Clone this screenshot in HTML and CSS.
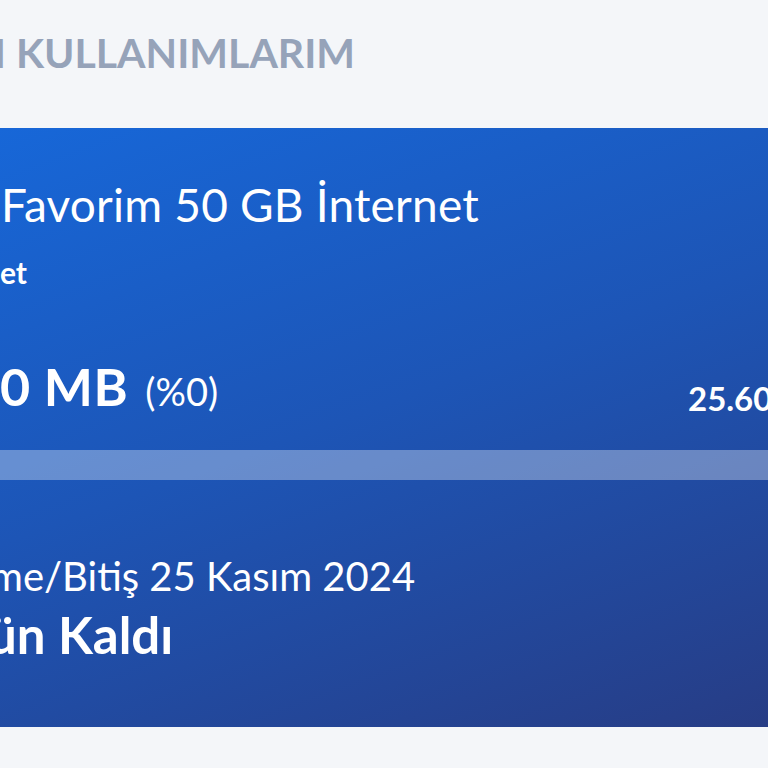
FILE: index.html
```html
<!DOCTYPE html>
<html lang="tr">

<head>
    <meta charset="UTF-8">
    <meta name="viewport" content="width=device-width, initial-scale=1.0">
    <title>Kullanımlarım</title>
    <link rel="stylesheet" href="styles.css">
</head>

<body>
    <div class="page">
        <h2 class="section-title"><span class="cut">TÜM</span> KULLANIMLARIM</h2>

        <div class="package-card">
            <div class="plan-name"><span class="cut">Süper</span> Favorim 50 GB İnternet</div>
            <div class="plan-type"><span class="cut">İntern</span>et</div>

            <div class="usage-row">
                <div class="used"><span class="cut">1</span>0 MB <span class="percent">(%0)</span></div>
                <div class="total">25.600 MB</div>
            </div>

            <div class="bar">
                <div class="bar-fill" style="width: 0%"></div>
            </div>

            <div class="renew"><span class="cut">Yenile</span>me/Bitiş 25 Kasım 2024</div>
            <div class="days"><span class="cut">7 G</span>ün Kaldı</div>
        </div>
    </div>
</body>

</html>
```

FILE: styles.css
```css
body {
    margin: 0;
    background: #f4f6f9;
    font-family: Lato, "Open Sans", sans-serif;
    overflow: hidden;
}

.page {
    width: 900px;
}

/* hidden word prefix that runs off the left edge */
.cut {
    display: inline-block;
    width: 0;
    direction: rtl;
    white-space: nowrap;
}

.section-title {
    margin: 0;
    padding: 28px 0 0 6px;
    height: 128px;
    box-sizing: border-box;
    font-size: 41px;
    line-height: 1.2;
    font-weight: 700;
    color: #96a3b9;
    white-space: nowrap;
}

.package-card {
    background: linear-gradient(160deg, #1767d8 0%, #1d55b6 45%, #283a80 100%);
    color: #ffffff;
    padding: 54px 0 67px 0;
    white-space: nowrap;
}

.plan-name {
    font-size: 46px;
    line-height: 1;
    letter-spacing: 0.2px;
    margin-left: -11px;
}

.plan-type {
    margin-top: 29px;
    font-size: 30px;
    line-height: 1;
    font-weight: 700;
}

.usage-row {
    margin-top: 73px;
    display: flex;
    align-items: flex-start;
}

.used {
    width: 702px;
    font-size: 52px;
    line-height: 1;
    font-weight: 700;
    letter-spacing: 0.5px;
    margin-left: -14px;
    padding-left: 14px;
    box-sizing: border-box;
}

.percent {
    font-size: 38px;
    font-weight: 400;
    letter-spacing: 0;
    margin-left: 4px;
}

.total {
    margin-top: 22px;
    font-size: 33px;
    line-height: 1;
    font-weight: 700;
}

.bar {
    margin-top: 35px;
    height: 30px;
    background: rgba(255, 255, 255, 0.33);
}

.bar-fill {
    height: 100%;
    background: #ffffff;
}

.renew {
    margin-top: 76px;
    font-size: 40px;
    line-height: 1;
    margin-left: -10px;
}

.days {
    margin-top: 13px;
    font-size: 51px;
    line-height: 1;
    font-weight: 700;
    margin-left: -12px;
}
```
